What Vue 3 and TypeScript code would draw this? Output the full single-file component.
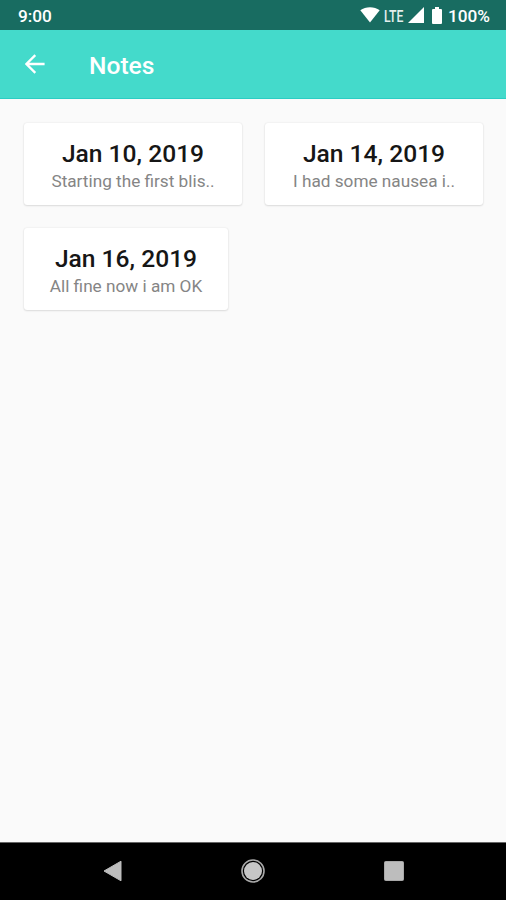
<script setup lang="ts">
interface Note {
  id: string
  date: string
  preview: string
}

const notes: Note[] = [
  { id: 'first', date: 'Jan 10, 2019', preview: 'Starting the first blis..' },
  { id: 'second', date: 'Jan 14, 2019', preview: 'I had some nausea i..' },
  { id: 'third', date: 'Jan 16, 2019', preview: 'All fine now i am OK' },
]
</script>

<template>
  <div class="screen">
    <header class="status">
      <span class="clock">9:00</span>
      <svg class="wifi" width="20" height="16" viewBox="0 0 20 16"><path d="M0.3 3.2C5.7-.7 14.3-.7 19.7 3.2L10 15.5Z" fill="#fff" /></svg>
      <span class="lte">LTE</span>
      <svg class="signal" width="16" height="16" viewBox="0 0 16 16"><path d="M0 16L16 0V16Z" fill="#fff" /></svg>
      <svg class="battery" width="10" height="17" viewBox="0 0 10 17"><path d="M3 0H7V2H9Q10 2 10 3V16Q10 17 9 17H1Q0 17 0 16V3Q0 2 1 2H3Z" fill="#fff" /></svg>
      <span class="percent">100%</span>
    </header>
    <div class="appbar">
      <svg class="back" width="20" height="20" viewBox="0 0 20 20"><path d="M19.6 10H1.8M10.3 1.1L1.4 10L10.3 18.9" fill="none" stroke="#fff" stroke-width="2.3" /></svg>
      <h1 class="heading">Notes</h1>
    </div>
    <main class="notes">
      <article v-for="note in notes" :key="note.id" class="card" :class="note.id">
        <h2 class="date">{{ note.date }}</h2>
        <p class="preview">{{ note.preview }}</p>
      </article>
    </main>
    <nav class="nav">
      <svg width="20" height="22" viewBox="0 0 20 22"><path d="M18 1.2V20.8L1 11Z" fill="#bdbdbd" stroke="#bdbdbd" stroke-width="1" stroke-linejoin="round" /></svg>
      <svg width="24" height="24" viewBox="0 0 24 24"><circle cx="12" cy="12" r="11" fill="none" stroke="#a9a9a9" stroke-width="1.6" /><circle cx="12" cy="12" r="9" fill="#c6c6c6" /></svg>
      <svg width="20" height="20" viewBox="0 0 20 20"><rect x=".5" y=".5" width="19" height="19" rx="1" fill="#bdbdbd" stroke="#a8a8a8" /></svg>
    </nav>
  </div>
</template>

<style>
body {
  margin: 0;
}
</style>

<style scoped>
.screen {
  display: flex;
  flex-direction: column;
  width: 506px;
  height: 900px;
  overflow: hidden;
  background: #fafafa;
  font-family: Roboto, sans-serif;
}
.status {
  display: flex;
  align-items: center;
  box-sizing: border-box;
  height: 30px;
  padding: 2px 16px 0 18px;
  background: #186c61;
  color: #fff;
  font-size: 17.2px;
  font-weight: 500;
  white-space: nowrap;
}
.status svg {
  margin-bottom: 2px;
}
.clock {
  margin-right: auto;
}
.wifi {
  margin-right: 4px;
}
.lte {
  width: 22px;
  margin-right: 2px;
  color: #e4efed;
  font-size: 16.5px;
  transform: scaleX(0.74);
  transform-origin: left center;
}
.signal {
  margin-right: 8px;
}
.battery {
  margin-right: 6px;
}
.percent {
  width: 42px;
}
.appbar {
  display: flex;
  align-items: center;
  box-sizing: border-box;
  height: 69px;
  padding: 0 25px;
  border-bottom: 1px solid #2bcdc4;
  background: #44dacb;
}
.back {
  margin-right: 44px;
}
.heading {
  margin: 3px 0 0;
  color: #fff;
  font-size: 24.6px;
  font-weight: 500;
  line-height: 30px;
}
.notes {
  display: grid;
  flex: 1;
  grid-template-columns: 218px 218px;
  align-content: start;
  gap: 23px;
  padding: 24px 24px 0;
}
.card {
  box-sizing: border-box;
  height: 82px;
  padding-top: 15px;
  border-radius: 3px;
  background: #fff;
  box-shadow: 0 1px 2px rgba(0, 0, 0, 0.1), 0 0 2px rgba(0, 0, 0, 0.1);
  text-align: center;
  white-space: nowrap;
}
.third {
  width: 204px;
}
.date {
  margin: 0;
  color: #161616;
  font-size: 24.6px;
  font-weight: 500;
  line-height: 31px;
}
.preview {
  margin: 0;
  color: #858585;
  font-size: 17.2px;
  line-height: 24px;
}
.nav {
  display: grid;
  grid-template-columns: repeat(3, 140.5px);
  place-content: center;
  place-items: center;
  box-sizing: border-box;
  height: 58px;
  padding-bottom: 2px;
  border-top: 1px solid #666;
  background: #000;
}
</style>
